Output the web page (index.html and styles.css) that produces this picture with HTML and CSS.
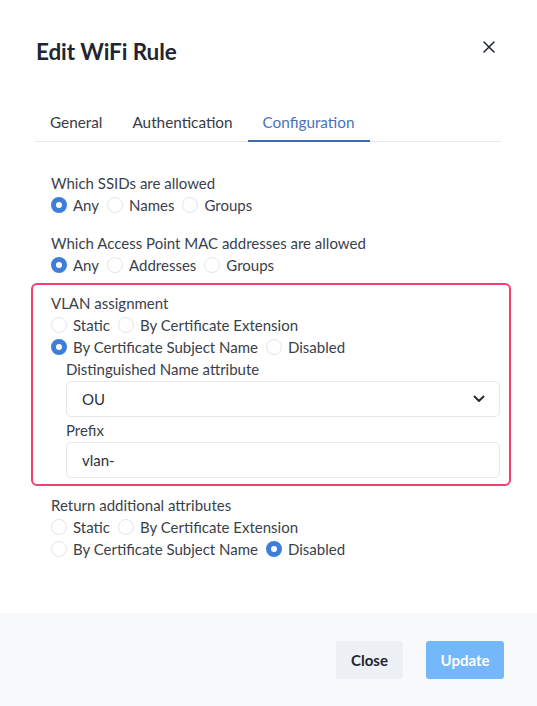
FILE: index.html
```html
<!DOCTYPE html>
<html lang="en">
<head>
<meta charset="utf-8">
<title>Edit WiFi Rule</title>
<link rel="stylesheet" href="styles.css">
</head>
<body>
<div class="modal">
  <div class="modal-header">
    <h1 class="modal-title">Edit WiFi Rule</h1>
    <button class="close-x" aria-label="Close">
      <svg width="12" height="12" viewBox="0 0 12 12"><path d="M1 1L11 11M11 1L1 11" stroke="#1f2532" stroke-width="1.5" fill="none" stroke-linecap="round"/></svg>
    </button>
  </div>
  <div class="tabs">
    <div class="tab">General</div>
    <div class="tab">Authentication</div>
    <div class="tab active">Configuration</div>
  </div>
  <div class="content">
    <div class="group">
      <div class="label">Which SSIDs are allowed</div>
      <div class="row">
        <span class="opt"><span class="radio checked"></span>Any</span>
        <span class="opt"><span class="radio"></span>Names</span>
        <span class="opt"><span class="radio"></span>Groups</span>
      </div>
    </div>
    <div class="group">
      <div class="label">Which Access Point MAC addresses are allowed</div>
      <div class="row">
        <span class="opt"><span class="radio checked"></span>Any</span>
        <span class="opt"><span class="radio"></span>Addresses</span>
        <span class="opt"><span class="radio"></span>Groups</span>
      </div>
    </div>
    <div class="group highlight">
      <div class="label">VLAN assignment</div>
      <div class="row">
        <span class="opt"><span class="radio"></span>Static</span>
        <span class="opt"><span class="radio"></span>By Certificate Extension</span>
      </div>
      <div class="row">
        <span class="opt"><span class="radio checked"></span>By Certificate Subject Name</span>
        <span class="opt"><span class="radio"></span>Disabled</span>
      </div>
      <div class="sub">
        <div class="label">Distinguished Name attribute</div>
        <div class="field select">
          <span>OU</span>
          <svg width="12" height="8" viewBox="0 0 12 8"><path d="M1.5 1.5L6 6L10.5 1.5" stroke="#1f2532" stroke-width="1.8" fill="none" stroke-linecap="round" stroke-linejoin="round"/></svg>
        </div>
        <div class="label">Prefix</div>
        <div class="field"><span>vlan-</span></div>
      </div>
    </div>
    <div class="group after">
      <div class="label">Return additional attributes</div>
      <div class="row">
        <span class="opt"><span class="radio"></span>Static</span>
        <span class="opt"><span class="radio"></span>By Certificate Extension</span>
      </div>
      <div class="row">
        <span class="opt"><span class="radio"></span>By Certificate Subject Name</span>
        <span class="opt"><span class="radio checked"></span>Disabled</span>
      </div>
    </div>
  </div>
  <div class="footer">
    <button class="btn btn-close">Close</button>
    <button class="btn btn-update">Update</button>
  </div>
</div>
</body>
</html>
```
FILE: styles.css
```css
* { box-sizing: border-box; }
html, body { margin: 0; padding: 0; }
body {
  font-family: Lato, "Open Sans", sans-serif;
  color: #3a3f4b;
  background: #fff;
}
.modal {
  min-height: 100vh;
  display: flex;
  flex-direction: column;
}
.modal-header {
  display: flex;
  justify-content: space-between;
  align-items: flex-start;
  padding: 38px 36px 0 36px;
}
.modal-title {
  margin: 0;
  font-size: 22.5px;
  line-height: 28px;
  font-weight: 700;
  color: #1f2532;
  letter-spacing: -0.1px;
}
.close-x {
  border: 0;
  background: none;
  padding: 0;
  margin: 3px 6px 0 0;
  width: 12px;
  height: 12px;
  display: flex;
}
.tabs {
  display: flex;
  margin: 38px 36px 0 35px;
  border-bottom: 1px solid #e3e7ee;
}
.tab {
  padding: 7px 15px 7px 15px;
  font-size: 15.3px;
  line-height: 22px;
  color: #373b45;
  border-bottom: 2px solid transparent;
  margin-bottom: -1px;
}
.tab.active {
  color: #4a74b8;
  border-bottom-color: #3f6cb0;
}
.content {
  padding: 30px 36px 0 51px;
  font-size: 15px;
  line-height: 22px;
}
.group + .group { margin-top: 16px; }
.label { color: #3a3f4b; }
.row {
  display: flex;
  align-items: center;
  gap: 8px;
  height: 22px;
}
.opt {
  display: inline-flex;
  align-items: center;
  gap: 6px;
  color: #3a3f4b;
}
.radio {
  width: 16px;
  height: 16px;
  border-radius: 50%;
  border: 1px solid #e1e5eb;
  background: #fff;
  display: inline-block;
  flex: none;
}
.radio.checked {
  border: 5px solid #3f7ed8;
  background: #fff;
}
.group.highlight {
  margin-top: 7px;
  margin-left: -20px;
  margin-right: -10px;
  padding: 7px 9px 6px 18px;
  border: 2px solid #f2416f;
  border-radius: 6px;
}
.group.after { margin-top: 8px; }
.sub { padding-left: 15px; }
.field {
  height: 36px;
  margin-top: 1px;
  border: 1px solid #e3e7ee;
  border-radius: 5px;
  display: flex;
  align-items: center;
  justify-content: space-between;
  padding: 0 14px 0 15px;
  color: #2d313b;
}
.field + .label { margin-top: 2px; }
.footer {
  margin-top: auto;
  background: #f8f9fb;
  height: 93px;
  display: flex;
  justify-content: flex-end;
  align-items: center;
  gap: 23px;
  padding: 1px 33px 0 0;
}
.btn {
  font-family: Lato, "Open Sans", sans-serif;
  font-size: 15px;
  font-weight: 700;
  height: 38px;
  border: 0;
  border-radius: 3px;
  padding: 0 14px;
}
.btn-close {
  background: #edf0f5;
  color: #1f2532;
  width: 67px;
}
.btn-update {
  background: #74b8fb;
  color: #fff;
  width: 78px;
}
```
